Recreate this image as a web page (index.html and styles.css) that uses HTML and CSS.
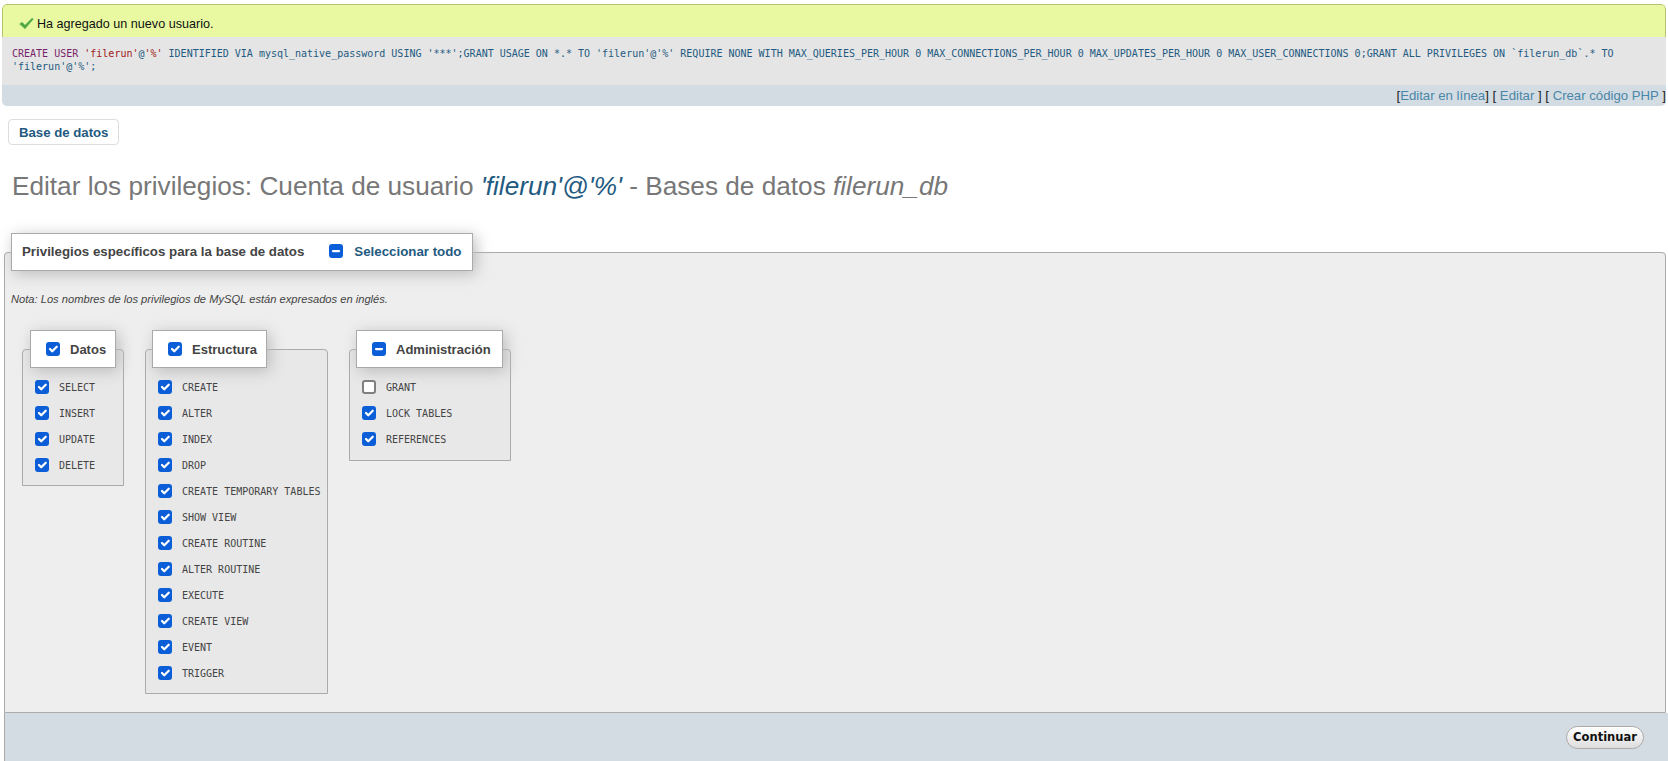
FILE: index.html
```html
<!DOCTYPE html>
<html lang="es">
<head>
<meta charset="utf-8">
<title>Editar los privilegios</title>
<link rel="stylesheet" href="styles.css">
</head>
<body>
<div class="result">
  <div class="alert"><svg class="ok" width="15" height="13" viewBox="0 0 15 13"><path d="M0.5 7 L3 5 L6 8 L13 1 L14.5 2 L6 12 Z" fill="#4fa83c" stroke="#8ac47c" stroke-width="0.6"/></svg>Ha agregado un nuevo usuario.</div>
  <div class="sql"><span class="kw">CREATE</span> <span class="kw">USER</span> <span class="str">'filerun'</span>@<span class="str">'%'</span> IDENTIFIED VIA mysql_native_password USING '***';GRANT USAGE ON *.* TO 'filerun'@'%' REQUIRE NONE WITH MAX_QUERIES_PER_HOUR 0 MAX_CONNECTIONS_PER_HOUR 0 MAX_UPDATES_PER_HOUR 0 MAX_USER_CONNECTIONS 0;GRANT ALL PRIVILEGES ON `filerun_db`.* TO <span class="sql-end">'filerun'@'%';</span></div>
  <div class="tools">[<a>Editar en línea</a>] [ <a>Editar</a> ] [ <a>Crear código PHP</a> ]</div>
</div>
<div class="tabs"><a class="tab">Base de datos</a></div>
<h2 class="title">Editar los privilegios: Cuenta de usuario <a>'filerun'@'%'</a> - Bases de datos <i>filerun_db</i></h2>
<form>
  <fieldset class="main">
    <legend class="main-legend"><span class="main-label">Privilegios específicos para la base de datos</span><span class="cb mixed all"></span><a>Seleccionar todo</a></legend>
    <p class="note">Nota: Los nombres de los privilegios de MySQL están expresados en inglés.</p>
    <div class="groups">
      <fieldset class="group datos">
        <legend><span class="cb on"></span>Datos</legend>
        <div class="item"><span class="cb on"></span><code>SELECT</code></div>
        <div class="item"><span class="cb on"></span><code>INSERT</code></div>
        <div class="item"><span class="cb on"></span><code>UPDATE</code></div>
        <div class="item"><span class="cb on"></span><code>DELETE</code></div>
      </fieldset>
      <fieldset class="group estructura">
        <legend><span class="cb on"></span>Estructura</legend>
        <div class="item"><span class="cb on"></span><code>CREATE</code></div>
        <div class="item"><span class="cb on"></span><code>ALTER</code></div>
        <div class="item"><span class="cb on"></span><code>INDEX</code></div>
        <div class="item"><span class="cb on"></span><code>DROP</code></div>
        <div class="item"><span class="cb on"></span><code>CREATE TEMPORARY TABLES</code></div>
        <div class="item"><span class="cb on"></span><code>SHOW VIEW</code></div>
        <div class="item"><span class="cb on"></span><code>CREATE ROUTINE</code></div>
        <div class="item"><span class="cb on"></span><code>ALTER ROUTINE</code></div>
        <div class="item"><span class="cb on"></span><code>EXECUTE</code></div>
        <div class="item"><span class="cb on"></span><code>CREATE VIEW</code></div>
        <div class="item"><span class="cb on"></span><code>EVENT</code></div>
        <div class="item"><span class="cb on"></span><code>TRIGGER</code></div>
      </fieldset>
      <fieldset class="group admin">
        <legend><span class="cb mixed"></span>Administración</legend>
        <div class="item"><span class="cb"></span><code>GRANT</code></div>
        <div class="item"><span class="cb on"></span><code>LOCK TABLES</code></div>
        <div class="item"><span class="cb on"></span><code>REFERENCES</code></div>
      </fieldset>
    </div>
  </fieldset>
  <div class="footer"><button type="button" class="go">Continuar</button></div>
</form>
</body>
</html>
```
FILE: styles.css
```css
* { box-sizing: border-box; }
html, body { height: 100%; }
body { margin: 0; overflow: hidden; background: #fff; color: #444; font-family: "Liberation Sans", Arial, sans-serif; font-size: 12px; }
a { color: #235a81; }

.result { margin: 4px 2px 0; border-radius: 5px; overflow: hidden; height: 102px; }
.alert { display: flex; align-items: center; gap: 3px; height: 33px; padding: 5px 0 0 16px; background: #e8f9a2; border: 1px solid #b5c271; border-bottom: 0; border-radius: 5px 5px 0 0; color: #111; font-size: 12.6px; }
.sql { height: 48px; padding: 10px 10px 0; background: #e5e5e5; color: #235a81; font-family: "DejaVu Sans Mono", monospace; font-size: 10px; line-height: 13px; }
.sql-end { display: inline-block; }
.kw { color: #7a1f6a; }
.str { color: #a01818; }
.tools { height: 21px; background: #d3dce3; color: #222; text-align: right; font-size: 13.2px; line-height: 22px; }
.tools a { color: #4a86a8; }

.tabs { display: flex; margin: 13px 0 0 8px; }
.tab { display: block; height: 26px; padding: 0 10px; background: #fff; border: 1px solid #ddd; border-radius: 4px; color: #235a81; font-size: 13.2px; font-weight: bold; line-height: 25px; }

.title { margin: 16px 0 0 12px; height: 50px; color: #777; font-size: 26.2px; font-weight: normal; line-height: 50px; }
.title a { color: #235a81; font-style: italic; }
.title i { font-style: italic; }

.main { display: block; margin: 22px 2px 0 4px; min-width: 0; height: 480px; padding: 0 0 0 6px; background: #eee; border: 1px solid #aaa; border-radius: 4px 4px 0 0; }
.main-legend { display: flex; align-items: center; width: 462px; height: 38px; margin: 0; padding: 0 10px 2px; background: #fff; border: 1px solid #aaa; box-shadow: 3px 3px 15px #bbb; color: #444; font-size: 13.3px; font-weight: bold; white-space: nowrap; }
.main-legend a { font-weight: bold; }
.cb { display: inline-block; flex: none; width: 14px; height: 14px; background: #fff center / 15px 15px no-repeat; border: 2px solid #808080; border-radius: 3px; }
.cb.on, .cb.mixed { border: 0; background-color: #0b5ed7; }
.cb.on { background-image: url("data:image/svg+xml,%3csvg xmlns='http://www.w3.org/2000/svg' viewBox='0 0 20 20'%3e%3cpath fill='none' stroke='%23fff' stroke-linecap='round' stroke-linejoin='round' stroke-width='3' d='m6 10 3 3 6-6'/%3e%3c/svg%3e"); }
.cb.mixed { background-image: url("data:image/svg+xml,%3csvg xmlns='http://www.w3.org/2000/svg' viewBox='0 0 20 20'%3e%3cpath fill='none' stroke='%23fff' stroke-linecap='round' stroke-linejoin='round' stroke-width='3' d='M6 10h8'/%3e%3c/svg%3e"); }
.cb.all { margin: 0 11px 0 25px; }

.note { margin: 22px 0 0; color: #444; font-size: 11.15px; font-style: italic; line-height: 13px; }
.groups { display: flex; align-items: flex-start; margin: 24px 0 0 11px; }
.group { display: block; min-width: 0; margin: 0; padding: 0 0 0 12px; background: #e8e8e8; border: 1px solid #aaa; border-radius: 4px 4px 0 0; }
.group legend { display: flex; align-items: center; height: 38px; margin: 0 0 0 -5px; padding: 0 0 0 15px; background: #fff; border: 1px solid #aaa; box-shadow: 3px 3px 15px #bbb; font-size: 13px; font-weight: bold; white-space: nowrap; }
.group legend .cb { margin-right: 10px; }
.datos { width: 102px; height: 156px; margin-right: 21px; }
.datos legend { width: 86px; }
.estructura { width: 183px; height: 364px; margin-right: 21px; }
.estructura legend { width: 115px; margin-left: -6px; }
.admin { width: 162px; height: 131px; }
.admin legend { width: 147px; margin-left: -6px; }
.item { display: flex; align-items: center; height: 26px; }
.item:first-of-type { margin-top: 6px; }
.item code { margin-left: 10px; color: #444; font-family: "DejaVu Sans Mono", monospace; font-size: 10px; }

.footer { display: flex; justify-content: flex-end; align-items: center; height: 48px; margin: 0 0 0 4px; padding: 0 24px 0 2px; background: #d3dce3; border-left: 1px solid #aaa; }
.go { height: 23px; width: 78px; padding: 0; background: linear-gradient(#fff, #ddd); border: 1px solid #aaa; border-radius: 12px; color: #111; font-family: "DejaVu Sans", sans-serif; font-size: 11.5px; font-weight: bold; }
```
